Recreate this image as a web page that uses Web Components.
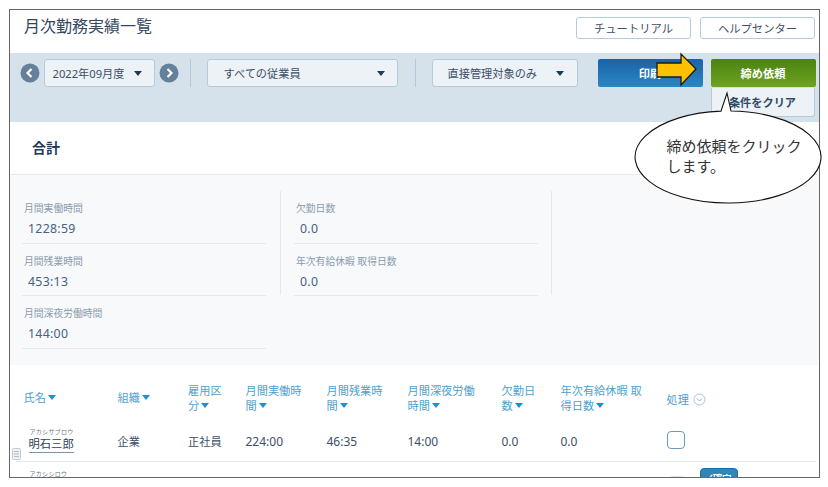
<!DOCTYPE html>
<html lang="ja"><head><meta charset="utf-8">
<style>
html,body{margin:0;padding:0;background:#fff;overflow:hidden}
body{font-family:"Noto Sans","Noto Sans CJK JP",sans-serif;color:#3c4f66}
</style></head><body>
<app-frame>
  <page-header title="月次勤務実績一覧"></page-header>
  <tool-bar></tool-bar>
  <summary-panel></summary-panel>
  <attendance-table></attendance-table>
  <call-out slot="over"></call-out>
</app-frame>
<script>
const FONT='"Noto Sans","Noto Sans CJK JP",sans-serif';
class Base extends HTMLElement{
  render(html){this.attachShadow({mode:'open'}).innerHTML=html;}
}
customElements.define('app-frame',class extends Base{connectedCallback(){this.render(`<style>
:host{display:block;position:relative;box-sizing:border-box;width:811px;height:469px;margin:9px 0 0 9px;border:1.5px solid #666;background:#fff;font-family:${FONT}}
.clip{position:absolute;inset:0;overflow:hidden;display:flex;flex-direction:column}
</style><div class="clip"><slot></slot></div><slot name="over"></slot>`);}});

customElements.define('page-header',class extends Base{connectedCallback(){this.render(`<style>
:host{display:flex;flex:none;height:43px;box-sizing:border-box;padding:6px 4px 0 14px;justify-content:space-between;align-items:flex-start}
h1{margin:0;font-size:16px;font-weight:400;color:#33475f;line-height:20px}
.b{display:flex;gap:9px;margin-top:1px}
.b span{box-sizing:border-box;width:115px;height:22px;border:1px solid #b5cbdc;border-radius:3px;font-size:11.3px;color:#3c4f66;display:flex;align-items:center;justify-content:center}
</style><h1>${this.getAttribute('title')}</h1><div class="b"><span>チュートリアル</span><span>ヘルプセンター</span></div>`);}});

customElements.define('drop-select',class extends Base{connectedCallback(){const w=this.getAttribute('w'),p=this.getAttribute('p')||8,g=this.getAttribute('g');this.render(`<style>
:host{display:flex;flex:none;box-sizing:border-box;width:${w}px;height:28px;background:#edf2f7;border:1px solid #b5cbdc;border-radius:3px;align-items:center;justify-content:space-between;padding:0 ${g}px 0 ${p}px;font-size:11.2px;color:#3c4f66}
i{width:0;height:0;border:4.5px solid transparent;border-top:5px solid #1f3a58;border-bottom:0}
</style><span><slot></slot></span><i></i>`);}});

customElements.define('round-nav',class extends Base{connectedCallback(){const d=this.getAttribute('d')=='l'?'M11.5 6 L7.5 10 L11.5 14':'M8.5 6 L12.5 10 L8.5 14';this.render(`<style>:host{display:block;flex:none;width:20px;height:20px}svg{display:block}</style>
<svg width="20" height="20" viewBox="0 0 20 20"><circle cx="10" cy="10" r="9.5" fill="#64809b"/><path d="${d}" fill="none" stroke="#fff" stroke-width="2.2"/></svg>`);}});

customElements.define('tool-bar',class extends Base{connectedCallback(){this.render(`<style>
:host{display:block;flex:none;height:69px;background:#d5e2ec;box-sizing:border-box;padding:6px 4px 0 9.5px;font-size:11.2px;position:relative}
.r{display:flex;align-items:flex-start}
.r>round-nav{margin-top:4px}
.sep{width:1px;height:28px;background:#b3c8d8;flex:none}
.c{width:105px;height:28px;box-sizing:border-box;border-radius:2px;display:flex;align-items:center;justify-content:center;color:#fff;font-weight:700;flex:none}
.p{background:linear-gradient(#1a62a8,#2a88c2);margin-left:20px}
.g{background:linear-gradient(#4b8213,#6ea41f)}
.col{display:flex;flex-direction:column;flex:none;margin-left:8px;}
.clear{box-sizing:border-box;width:104px;height:29px;margin-top:1px;background:#edf2f7;border:1px solid #b5cbdc;border-top:0;border-radius:0 0 3px 3px;display:flex;align-items:center;justify-content:center;font-weight:700;color:#2f4a68}
</style><div class="r">
<round-nav d="l"></round-nav>
<drop-select w="111" p="8" g="12" style="margin:0 4px">2022年09月度</drop-select>
<round-nav d="r"></round-nav>
<div class="sep" style="margin:0 16px 0 11px"></div>
<drop-select w="191" p="16" g="12">すべての従業員</drop-select>
<div class="sep" style="margin:0 16px 0 17px"></div>
<drop-select w="146" p="15" g="13">直接管理対象のみ</drop-select>
<div class="c p">印刷</div>
<div class="col"><div class="c g">締め依頼</div><div class="clear">条件をクリア</div></div>
</div>`);}});

customElements.define('stat-item',class extends Base{connectedCallback(){this.render(`<style>
:host{display:block;box-sizing:border-box;height:52.5px;border-bottom:1px solid #e3e8ed;padding-top:11px}
.l{font-size:9.8px;line-height:14px;color:#8c9bac}
.v{font-size:12.3px;line-height:16px;margin:5px 0 0 4px;color:#47607f;letter-spacing:.3px}
</style><div class="l">${this.getAttribute('label')}</div><div class="v">${this.getAttribute('value')}</div>`);}});

customElements.define('summary-panel',class extends Base{connectedCallback(){this.render(`<style>
:host{display:block;flex:none}
.t{height:53px;box-sizing:border-box;border-bottom:1px solid #e6eaee;padding:16px 0 0 22px;font-size:14px;font-weight:700;color:#1e3a5a;line-height:20px}
.s{height:190px;box-sizing:border-box;background:#f7f9fb;padding:16px 0 0 12px;display:flex;align-items:flex-start}
.col{width:244px;flex:none;display:block}
.col stat-item{padding-left:2px}
.v{width:1px;height:104px;background:#e3e8ed;flex:none}
</style><div class="t">合計</div><div class="s">
<div class="col"><stat-item label="月間実働時間" value="1228:59"></stat-item><stat-item label="月間残業時間" value="453:13"></stat-item><stat-item label="月間深夜労働時間" value="144:00"></stat-item></div>
<div class="v" style="margin:0 13px 0 14px"></div>
<div class="col"><stat-item label="欠勤日数" value="0.0"></stat-item><stat-item label="年次有給休暇 取得日数" value="0.0"></stat-item></div>
<div class="v" style="margin-left:13px"></div>
</div>`);}});

customElements.define('sort-head',class extends Base{connectedCallback(){this.render(`<style>
:host{display:block;font-size:11.2px;line-height:15px;color:#4f9fd0;padding-right:20px}
i{display:inline-block;width:0;height:0;border:4.5px solid transparent;border-top:5px solid #1f8fd0;border-bottom:0;margin-left:2px;vertical-align:2px}
</style><slot></slot><i></i>`);}});

customElements.define('attendance-table',class extends Base{connectedCallback(){this.render(`<style>
:host{display:block;flex:1;min-height:0;position:relative;font-size:11.2px;color:#3c4f66}
.g{display:grid;grid-template-columns:94px 70.5px 57.5px 81px 81px 94px 59px 106px 1fr;padding-left:13.5px}
.h{height:64px;align-items:center;padding-top:1px;box-sizing:border-box}
.row{height:32px;align-items:start;}
.line{height:1px;background:#dfe8f0;margin:0 3px 0 5.5px}
.name{padding-left:5px;}
.f{font-size:6px;line-height:7px;letter-spacing:.3px;color:#68778a;padding-left:1px}
.n{display:inline-block;font-size:11.3px;line-height:15px;border-bottom:1px solid #7d93a8;padding-bottom:1px;color:#2f4358}
.cell{margin-top:4px;line-height:18px}
.num{font-size:12px}
.chk{box-sizing:border-box;width:18px;height:18px;border:1.5px solid #6f9bbd;border-radius:4px;margin-top:2px}
.th{font-size:11.2px;color:#4f9fd0;display:flex;align-items:center;gap:4px;padding-top:3px}
.doc{position:absolute;left:2px;top:82.5px}
.conf{position:absolute;left:689.5px;top:103px;width:38px;height:24px;border-radius:4px;background:#2f86b8;border:1px solid #1e6f9f;box-sizing:border-box;color:#fff;font-size:9.5px;text-align:center;line-height:20px;font-weight:700}
.fade{position:absolute;left:657.5px;top:110.5px;width:18px;height:14px;border:1px solid #dde6ee;border-radius:4px 4px 0 0;box-sizing:border-box}
</style>
<div class="g h">
<sort-head>氏名</sort-head><sort-head>組織</sort-head><sort-head>雇用区分</sort-head><sort-head>月間実働時間</sort-head><sort-head>月間残業時間</sort-head><sort-head>月間深夜労働時間</sort-head><sort-head>欠勤日数</sort-head><sort-head>年次有給休暇 取得日数</sort-head>
<div class="th">処理<svg width="13" height="13" viewBox="0 0 13 13"><circle cx="6.5" cy="6.5" r="5.5" fill="none" stroke="#a9c3d6"/><path d="M4 5.5 L6.5 8 L9 5.5" fill="none" stroke="#8fb0c8"/></svg></div>
</div>
<div class="g row">
<div class="name"><div class="f">アカシサブロウ</div><span class="n">明石三郎</span></div>
<div class="cell">企業</div><div class="cell">正社員</div><div class="cell num">224:00</div><div class="cell num">46:35</div><div class="cell num">14:00</div><div class="cell num">0.0</div><div class="cell num">0.0</div><div><div class="chk"></div></div>
</div>
<div class="line"></div>
<div class="g" style="padding-top:9px"><div class="name"><div class="f">アカシシロウ</div></div></div>
<svg class="doc" width="9" height="12" viewBox="0 0 9 12"><rect x=".5" y=".5" width="8" height="11" rx="1" fill="#eef2f5" stroke="#c3ccd4"/><path d="M2 3.5H7M2 6H7M2 8.5H7" stroke="#b5bec7"/></svg>
<div class="fade"></div><div class="conf">✓確定</div>
</div>`);}});

customElements.define('call-out',class extends Base{connectedCallback(){this.render(`<style>
:host{display:block;position:absolute;left:-10.5px;top:-10.5px;width:828px;height:487px;pointer-events:none}
svg{position:absolute;left:0;top:0}
.t{position:absolute;left:667px;top:136px;width:140px;font-size:15px;line-height:20px;color:#333;font-family:"Noto Sans CJK JP",sans-serif}
</style>
<svg width="828" height="487" viewBox="0 0 828 487">
<path d="M721 111.13 A93 46 0 1 0 731 111.02 L727 93 Z" fill="#fff" stroke="#111" stroke-width="1.1"/>
<path d="M657 63 H681 V54 L696 69 L681 85 V77 H657 Z" fill="#ffc000" stroke="#1a1a1a" stroke-width="1.3"/>
</svg>
<div class="t">締め依頼をクリックします。</div>`);}});
</script>
</body></html>
